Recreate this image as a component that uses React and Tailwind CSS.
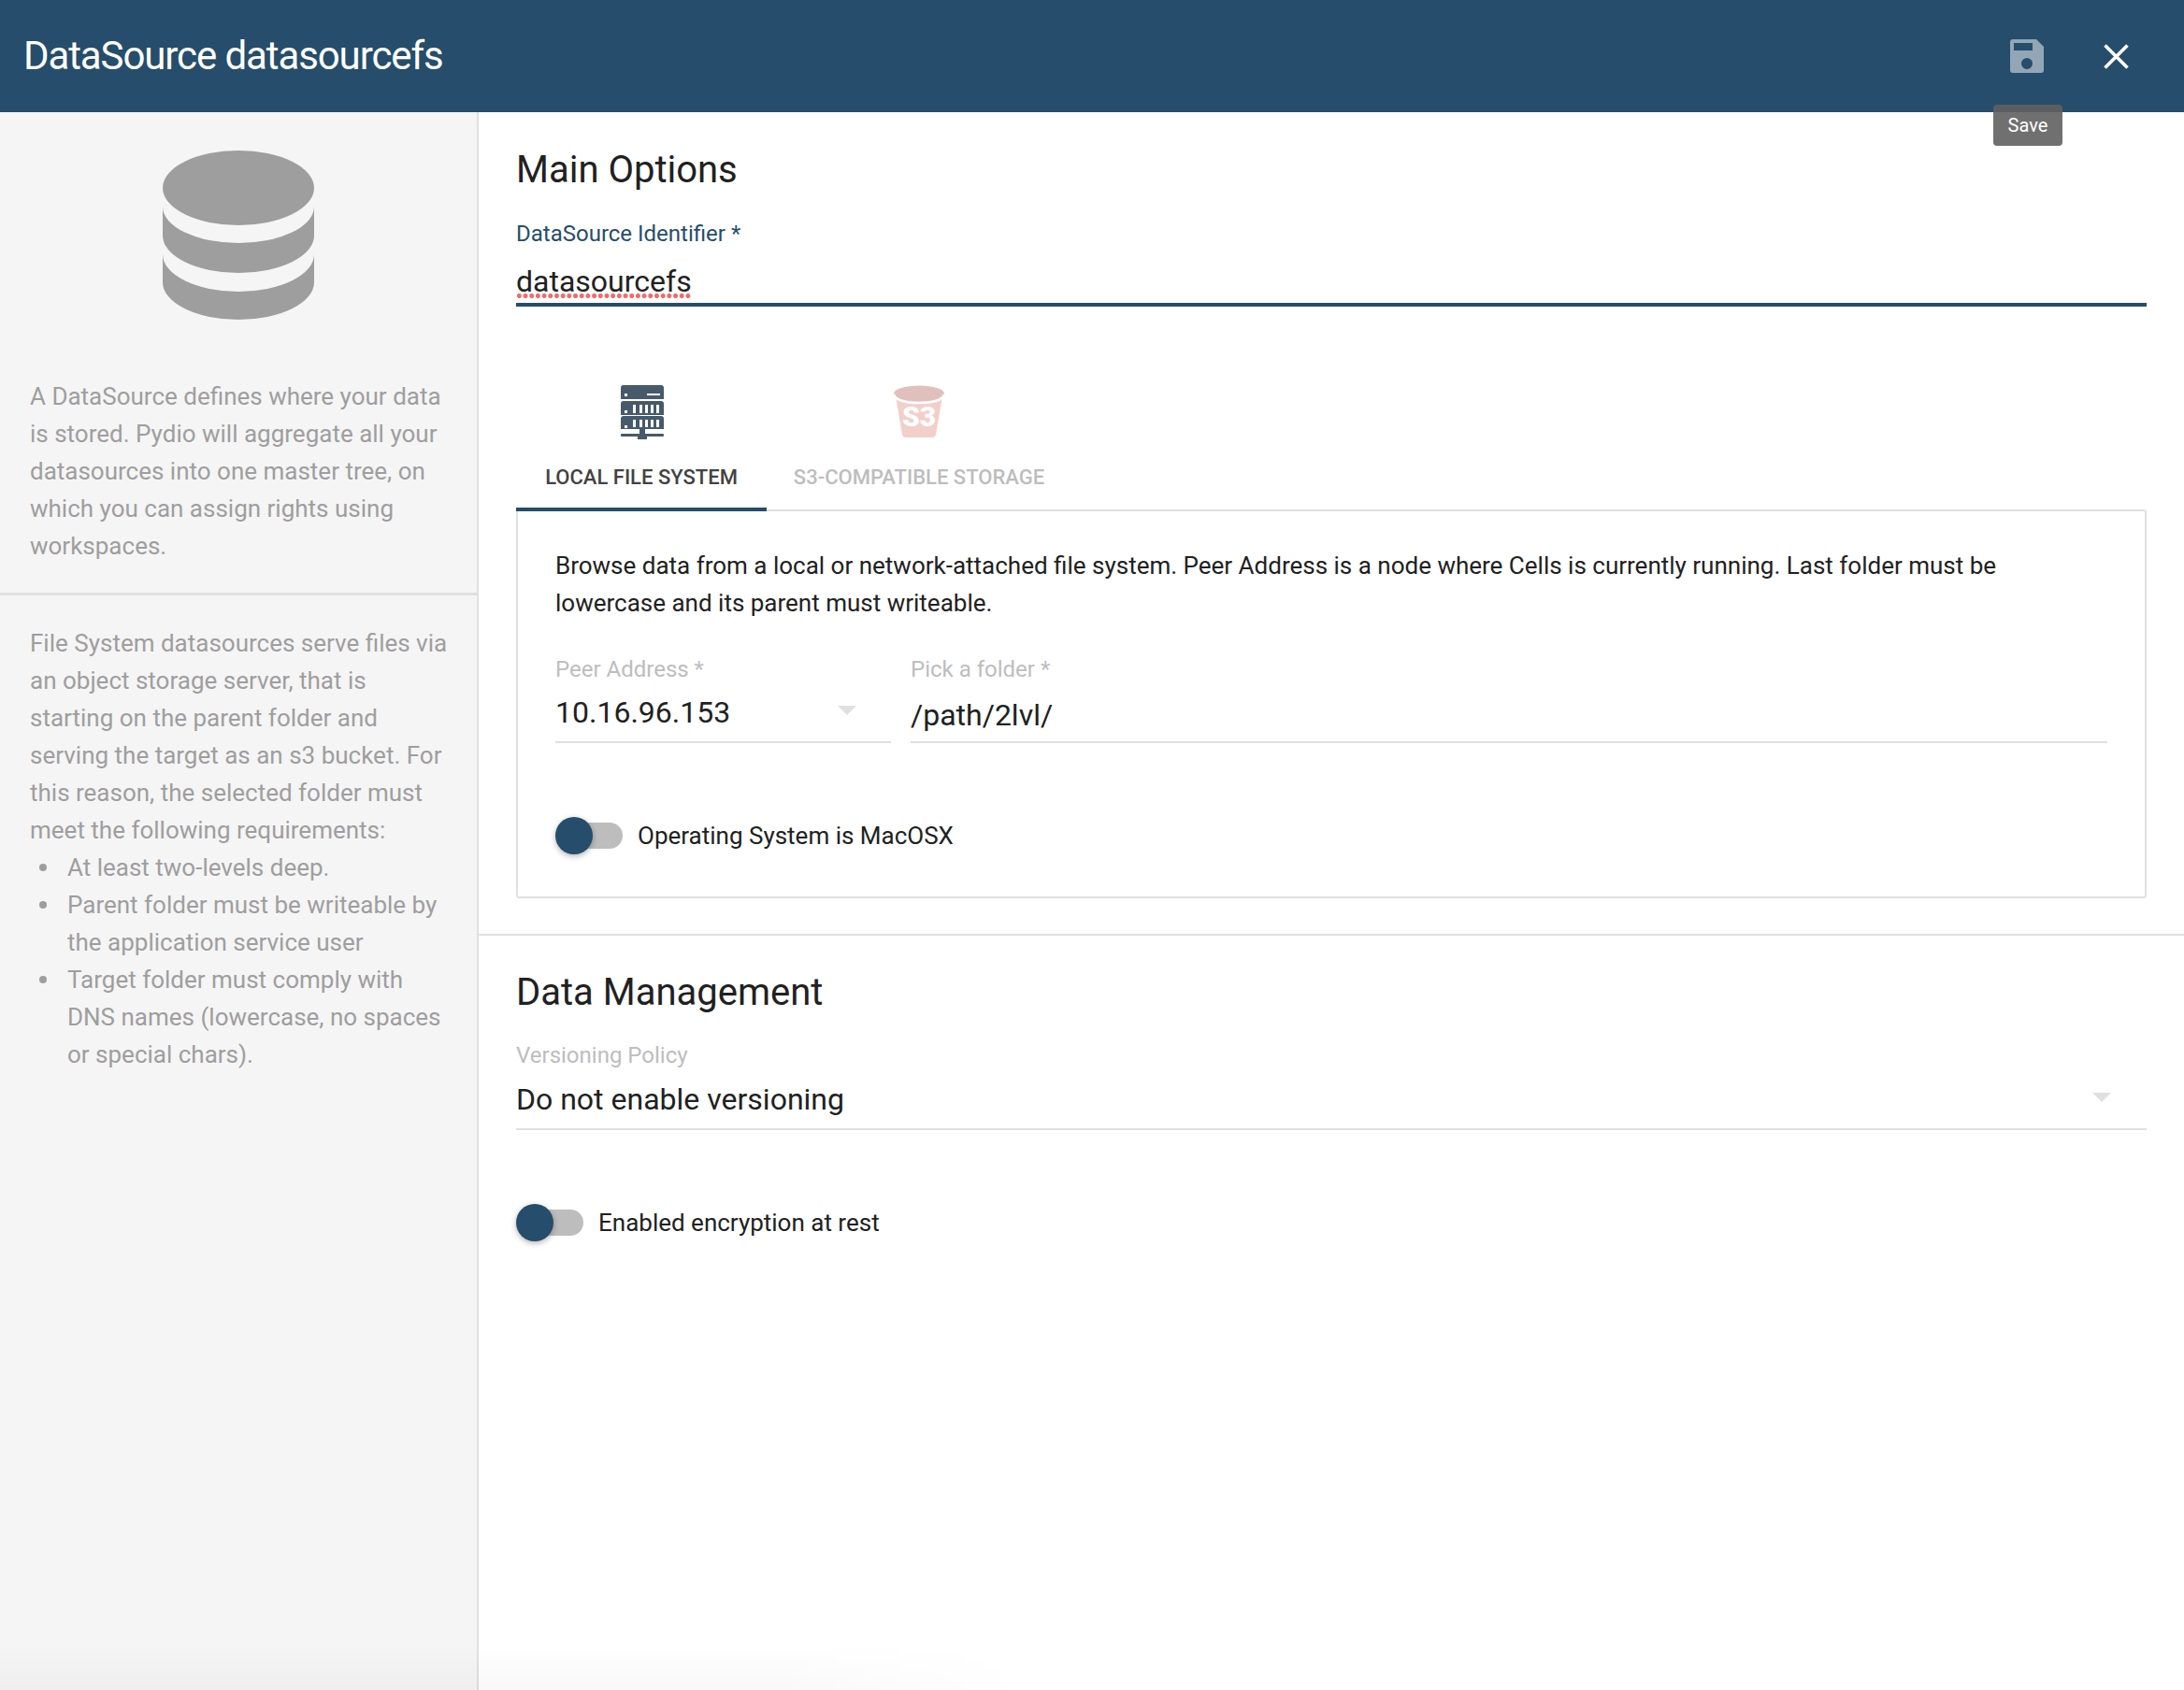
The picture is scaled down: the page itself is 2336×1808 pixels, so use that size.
import React from "react";

const font = { fontFamily: "Roboto, sans-serif" };

function Toggle({ label }) {
  return (
    <div className="flex items-center h-[40px]">
      <div className="relative w-[72px] h-[40px] shrink-0">
        <div className="absolute left-[8px] top-[6px] w-[64px] h-[28px] rounded-full bg-[#bdbdbd]" />
        <div className="absolute left-0 top-0 w-[40px] h-[40px] rounded-full bg-[#264d6b] shadow-[0_2px_6px_rgba(0,0,0,0.3)]" />
      </div>
      <span className="ml-[16px] text-[26px] leading-[32px] text-[#212121]">{label}</span>
    </div>
  );
}

function Caret() {
  return <div className="mb-[4px] w-0 h-0 border-l-[10px] border-r-[10px] border-t-[10px] border-l-transparent border-r-transparent border-t-[#e0e0e0]" />;
}

function ServerIcon() {
  return (
    <svg className="ml-[2px]" width="46" height="58" viewBox="0 0 46 58" fill="#475a6b">
      <path fillRule="evenodd" d="M3 0h40a3 3 0 0 1 3 3v12H0V3a3 3 0 0 1 3-3zM4 9v3h3V9zM28 9v2h14V9z" />
      <path fillRule="evenodd" d="M3 17h40a3 3 0 0 1 3 3v12H0V20a3 3 0 0 1 3-3zM4 27v3h3v-3zM13 21v9h3v-9zM20 21v9h3v-9zM26 21v9h3v-9zM32 21v9h3v-9zM38 21v9h3v-9z" />
      <path fillRule="evenodd" d="M3 33h40a3 3 0 0 1 3 3v11H0V36a3 3 0 0 1 3-3zM4 43v3h3v-3zM13 37v8h3v-8zM20 37v8h3v-8zM26 37v8h3v-8zM32 37v8h3v-8zM38 37v8h3v-8z" />
      <path d="M20 47h6v5h19a1 1 0 0 1 1 1v1a1 1 0 0 1-1 1H28v3h-10v-3H1a1 1 0 0 1-1-1v-1a1 1 0 0 1 1-1h19z" />
    </svg>
  );
}

function BucketIcon() {
  return (
    <svg width="56" height="58" viewBox="0 0 56 58">
      <path d="M3 12 L10 53 Q11 56 14 56 L42 56 Q45 56 46 53 L53 12 Z" fill="#f3cfca" />
      <ellipse cx="28" cy="9" rx="27" ry="8.5" fill="#e0c0bc" />
      <path d="M1 10 Q4 19 28 19 Q52 19 55 10" fill="none" stroke="#ffffff" strokeWidth="2.5" />
      <text x="28" y="44" textAnchor="middle" fontFamily="Roboto, sans-serif" fontWeight="900" fontSize="30" fill="#ffffff">S3</text>
    </svg>
  );
}

function Bullet({ children }) {
  return (
    <li className="flex">
      <span className="w-[40px] shrink-0 flex pt-[16px] pl-[10px]">
        <span className="w-[8px] h-[8px] rounded-full bg-[#9e9e9e]" />
      </span>
      <span>{children}</span>
    </li>
  );
}

export default function App() {
  return (
    <div className="relative flex flex-col h-screen bg-white overflow-hidden" style={font}>
      <header className="flex items-center h-[120px] shrink-0 bg-[#264d6b] pl-[25px]">
        <div className="text-[42px] leading-[56px] font-normal tracking-[-1.1px] text-white">DataSource datasourcefs</div>
        <div className="ml-auto flex items-center">
          <svg className="mr-[64px]" width="36" height="36" viewBox="0 0 36 36" fill="#92a6b5">
            <path fillRule="evenodd" d="M3 0h25l8 8v25a3 3 0 0 1-3 3H3a3 3 0 0 1-3-3V3a3 3 0 0 1 3-3zM4 4v8h20V4zM18 20a6 6 0 1 0 0 12 6 6 0 0 0 0-12z" />
          </svg>
          <svg className="mr-[59px]" width="27" height="27" viewBox="0 0 27 27" stroke="#ffffff" strokeWidth="3.6" fill="none">
            <path d="M1.5 1.5L25.5 25.5M25.5 1.5L1.5 25.5" />
          </svg>
        </div>
      </header>
      <div className="absolute left-[2132px] top-[112px] w-[74px] h-[44px] rounded-[4px] bg-[#616161]/90 flex items-center justify-center text-[20px] text-white">Save</div>
      <div className="flex flex-1 min-h-0">
        <aside className="w-[512px] shrink-0 bg-[#f5f5f5] border-r-2 border-[#e0e0e0] text-[26px] leading-[40px] font-normal text-[#9e9e9e]">
          <div className="flex justify-center pt-[41px]">
            <svg width="162" height="181" viewBox="0 0 162 181" fill="#9e9e9e">
              <ellipse cx="81" cy="40" rx="81" ry="40" />
              <path d="M0 60A81 39 0 0 0 162 60V91A81 40 0 0 1 0 91Z" />
              <path d="M0 111A81 40 0 0 0 162 111V141A81 40 0 0 1 0 141Z" />
            </svg>
          </div>
          <p className="mt-[62px] pl-[32px] pr-[28px] pb-[30px] border-b-[3px] border-[#e0e0e0]">A DataSource defines where your data is stored. Pydio will aggregate all your datasources into one master tree, on which you can assign rights using workspaces.</p>
          <div className="pl-[32px] pr-[28px] pt-[31px]">
            <p>File System datasources serve files via an object storage server, that is starting on the parent folder and serving the target as an s3 bucket. For this reason, the selected folder must meet the following requirements:</p>
            <ul>
              <Bullet>At least two-levels deep.</Bullet>
              <Bullet>Parent folder must be writeable by the application service user</Bullet>
              <Bullet>Target folder must comply with DNS names (lowercase, no spaces or special chars).</Bullet>
            </ul>
          </div>
        </aside>
        <main className="flex-1 min-w-0">
          <section className="px-[40px] pt-[34px] pb-[38px] border-b-2 border-[#e0e0e0]">
            <h2 className="text-[40px] leading-[56px] font-normal text-[#212121]">Main Options</h2>
            <div className="mt-[22px] text-[24px] leading-[36px] text-[#264d6b]">DataSource Identifier *</div>
            <div className="mt-[12px] text-[32px] leading-[42px] text-[#212121] border-b-4 border-[#264d6b] h-[48px]">
              <span className="relative inline-block">
                datasourcefs
                <span className="absolute left-0 right-0 top-[34px] h-[5px] bg-[radial-gradient(circle,#f26b6b_2.3px,transparent_2.8px)] bg-[length:6.7px_5px] bg-repeat-x" />
              </span>
            </div>
            <div className="mt-[82px] flex h-[137px] items-stretch">
              <div className="w-[268px] border-b-4 border-[#264d6b] flex flex-col items-center relative z-10">
                <div className="mt-[2px]"><ServerIcon /></div>
                <div className="mt-[25px] text-[22px] leading-[32px] font-medium text-[#424242]">LOCAL FILE SYSTEM</div>
              </div>
              <div className="w-[326px] flex flex-col items-center">
                <div className="mt-[2px]"><BucketIcon /></div>
                <div className="mt-[25px] text-[22px] leading-[32px] font-medium text-[#bdbdbd]">S3-COMPATIBLE STORAGE</div>
              </div>
            </div>
            <div className="-mt-[2px] border-2 border-[#e0e0e0] rounded-[3px] h-[416px] px-[40px] pt-[38px]">
              <p className="text-[26px] leading-[40px] text-[#212121]">Browse data from a local or network-attached file system. Peer Address is a node where Cells is currently running. Last folder must be lowercase and its parent must writeable.</p>
              <div className="flex gap-[21px] mt-[33px]">
                <div className="w-[359px] shrink-0 h-[97px] border-b-2 border-[#e0e0e0]">
                  <div className="text-[24px] leading-[36px] text-[#bdbdbd]">Peer Address *</div>
                  <div className="flex items-center justify-between pr-[37px] mt-[7px]">
                    <span className="text-[32px] leading-[42px] text-[#212121]">10.16.96.153</span>
                    <Caret />
                  </div>
                </div>
                <div className="flex-1 h-[97px] border-b-2 border-[#e0e0e0]">
                  <div className="text-[24px] leading-[36px] text-[#bdbdbd]">Pick a folder *</div>
                  <div className="mt-[10px] text-[32px] leading-[42px] text-[#212121]">/path/2lvl/</div>
                </div>
              </div>
              <div className="mt-[79px]"><Toggle label="Operating System is MacOSX" /></div>
            </div>
          </section>
          <section className="px-[40px] pt-[33px]">
            <h2 className="text-[40px] leading-[56px] font-normal text-[#212121]">Data Management</h2>
            <div className="mt-[21px] h-[98px] border-b-2 border-[#e0e0e0]">
              <div className="text-[24px] leading-[36px] text-[#bdbdbd]">Versioning Policy</div>
              <div className="flex items-center justify-between pr-[38px] mt-[8px]">
                <span className="text-[32px] leading-[42px] text-[#212121]">Do not enable versioning</span>
                <Caret />
              </div>
            </div>
            <div className="mt-[79px]"><Toggle label="Enabled encryption at rest" /></div>
          </section>
        </main>
      </div>
      <div className="absolute left-0 bottom-0 w-[1100px] h-[50px] pointer-events-none bg-linear-to-t from-black/[0.025] to-transparent [mask-image:linear-gradient(to_right,black_75%,transparent)]" />
    </div>
  );
}
